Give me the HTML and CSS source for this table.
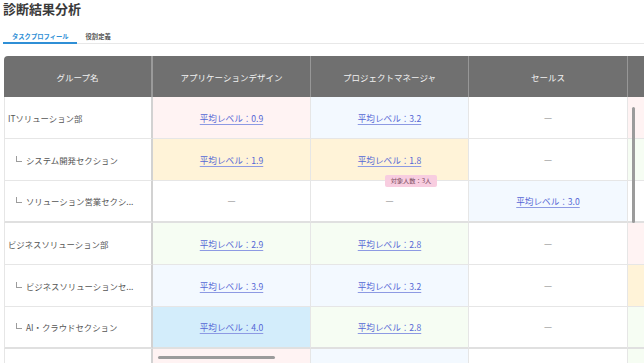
FILE: index.html
```html
<!DOCTYPE html>
<html lang="ja">
<head>
<meta charset="utf-8">
<title>診断結果分析</title>
<link rel="stylesheet" href="styles.css">
</head>
<body>
<h1 class="title">診断結果分析</h1>
<div class="tabs">
  <div class="tab active">タスクプロフィール</div>
  <div class="tab">役割定義</div>
</div>
<div class="table-wrap">
  <div class="matrix">
    <div class="cell head name-col">グループ名</div>
    <div class="cell head">アプリケーションデザイン</div>
    <div class="cell head">プロジェクトマネージャ</div>
    <div class="cell head">セールス</div>
    <div class="cell head"></div>

    <div class="cell name">ITソリューション部</div>
    <div class="cell pink"><a class="lv" href="#">平均レベル：0.9</a></div>
    <div class="cell lblue"><a class="lv" href="#">平均レベル：3.2</a></div>
    <div class="cell"><span class="dash">—</span></div>
    <div class="cell pink"></div>

    <div class="cell name"><span class="branch"></span><span class="label">システム開発セクション</span></div>
    <div class="cell yellow"><a class="lv" href="#">平均レベル：1.9</a></div>
    <div class="cell yellow"><a class="lv" href="#">平均レベル：1.8</a></div>
    <div class="cell"><span class="dash">—</span></div>
    <div class="cell green"></div>

    <div class="cell name group-end" title="ソリューション営業セクション"><span class="branch"></span><span class="label">ソリューション営業セクシ...</span></div>
    <div class="cell group-end"><span class="dash">—</span></div>
    <div class="cell group-end"><span class="dash">—</span></div>
    <div class="cell lblue group-end"><a class="lv" href="#">平均レベル：3.0</a></div>
    <div class="cell group-end"></div>

    <div class="cell name">ビジネスソリューション部</div>
    <div class="cell green"><a class="lv" href="#">平均レベル：2.9</a></div>
    <div class="cell green"><a class="lv" href="#">平均レベル：2.8</a></div>
    <div class="cell"><span class="dash">—</span></div>
    <div class="cell pink"></div>

    <div class="cell name" title="ビジネスソリューションセクション"><span class="branch"></span><span class="label">ビジネスソリューションセ...</span></div>
    <div class="cell lblue"><a class="lv" href="#">平均レベル：3.9</a></div>
    <div class="cell lblue"><a class="lv" href="#">平均レベル：3.2</a></div>
    <div class="cell"><span class="dash">—</span></div>
    <div class="cell yellow"></div>

    <div class="cell name group-end"><span class="branch"></span><span class="label">AI・クラウドセクション</span></div>
    <div class="cell sky group-end"><a class="lv" href="#">平均レベル：4.0</a></div>
    <div class="cell green group-end"><a class="lv" href="#">平均レベル：2.8</a></div>
    <div class="cell group-end"><span class="dash">—</span></div>
    <div class="cell green group-end"></div>

    <div class="cell name"></div>
    <div class="cell pink"></div>
    <div class="cell lblue"></div>
    <div class="cell"></div>
    <div class="cell green"></div>
  </div>
  <div class="tooltip">対象人数：3人</div>
  <div class="scroll-v"></div>
  <div class="scroll-h"></div>
</div>
</body>
</html>
```
FILE: styles.css
```css
html, body {
  margin: 0;
  padding: 0;
  overflow: hidden;
  background: #ffffff;
}
body {
  font-family: "Noto Sans CJK JP", "Noto Sans", sans-serif;
  color: #555555;
  width: 644px;
  height: 363px;
}
.title {
  margin: 0;
  padding-left: 3px;
  font-size: 13px;
  line-height: 18px;
  font-weight: 700;
  color: #3a3a3a;
}
.tabs {
  display: flex;
  margin-top: 10px;
  border-bottom: 1px solid #e8e8e8;
  margin-left: 3px;
}
.tab {
  font-size: 6.3px;
  line-height: 10px;
  font-weight: 700;
  color: #555555;
  padding: 4px 9px 0 9px;
  height: 14px;
  box-sizing: border-box;
  margin-bottom: -1px;
  border-bottom: 2px solid transparent;
}
.tab.active {
  color: #2f8fd6;
  border-bottom-color: #2f8fd6;
  padding-left: 9px;
  padding-right: 8px;
  height: 16px;
}
.table-wrap {
  position: relative;
  margin: 12px 0 0 4px;
  width: 640px;
  height: 307px;
  overflow: hidden;
  border-top-left-radius: 4px;
}
.matrix {
  display: grid;
  grid-template-columns: 149px 158px 158px 159px 158px;
  grid-template-rows: 41px;
  grid-auto-rows: 42px;
  width: max-content;
}
.cell {
  box-sizing: border-box;
  display: flex;
  align-items: center;
  justify-content: center;
  border-right: 1px solid #e6e6e6;
  border-bottom: 1px solid #e6e6e6;
  font-size: 8.4px;
  line-height: 12px;
  min-width: 0;
  background: #ffffff;
}
.cell.head {
  background: #707070;
  color: #f2f2f2;
  border-right: 1px solid #979797;
  border-bottom: none;
  font-size: 8.5px;
}
.cell.head.name-col {
  border-right: 2px solid #9a9a9a;
}
.cell.name {
  justify-content: flex-start;
  padding: 0 6px 0 3px;
  border-left: 1px solid #e6e6e6;
  border-right: 2px solid #d2d2d2;
  color: #555555;
  white-space: nowrap;
}
.cell.name .branch {
  flex: none;
  display: inline-block;
  width: 5px;
  height: 5px;
  border-left: 1px solid #9c9c9c;
  border-bottom: 1px solid #9c9c9c;
  margin: 0 4px 0 8px;
  position: relative;
  top: -1px;
}
.cell.name .label {
  white-space: nowrap;
}
.cell.group-end {
  border-bottom: 2px solid #e0e0e0;
}
.pink { background: #fff3f3; }
.lblue { background: #f3f9ff; }
.yellow { background: #fff3d8; }
.green { background: #f6fdf3; }
.sky { background: #d3edfb; }
.lv {
  color: #5567d5;
  font-size: 8.6px;
  text-decoration: underline;
  text-decoration-color: #8d9ae3;
  text-underline-offset: 1.5px;
  white-space: nowrap;
}
.dash {
  color: #8c8c8c;
  font-size: 9px;
}
.tooltip {
  position: absolute;
  left: 381px;
  top: 119px;
  width: 52px;
  height: 12px;
  box-sizing: border-box;
  background: #f8cde0;
  color: #7d4e60;
  border-radius: 2px;
  font-size: 6.2px;
  line-height: 12px;
  text-align: center;
  white-space: nowrap;
}
.scroll-v {
  position: absolute;
  left: 628px;
  top: 51px;
  width: 3px;
  height: 116px;
  border-radius: 2px;
  background: #9b9b9b;
}
.scroll-h {
  position: absolute;
  left: 154px;
  top: 300px;
  width: 117px;
  height: 3px;
  border-radius: 2px;
  background: #9b9b9b;
}
```
